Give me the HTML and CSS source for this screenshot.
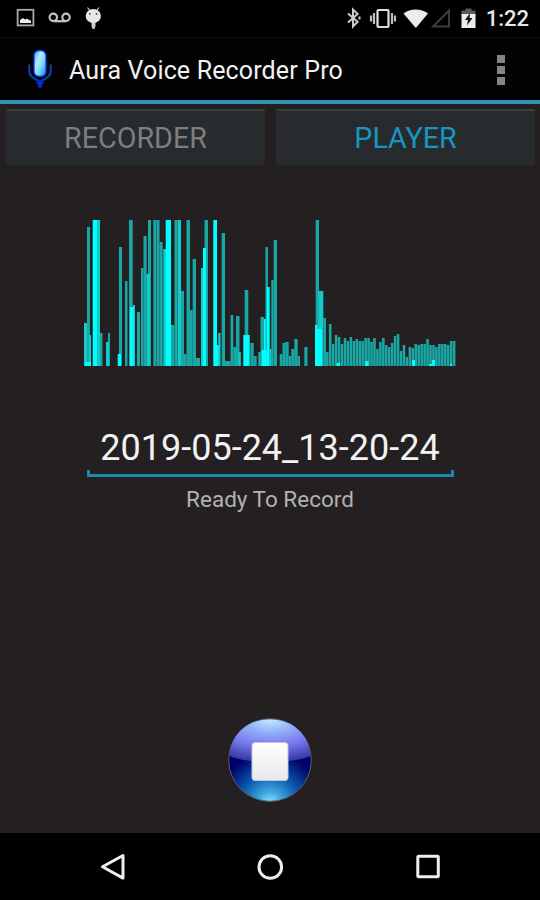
FILE: index.html
```
<!DOCTYPE html>
<html lang="en">

<head>
    <meta charset="UTF-8">
    <meta name="viewport" content="width=device-width, initial-scale=1.0">
    <title>Aura Voice Recorder Pro</title>
    <link rel="stylesheet" href="styles.css">
</head>

<body>
    <div class="status-bar">
        <svg class="status-icons" width="90" height="24" viewBox="0 0 90 24">
            <!-- picture -->
            <rect x="1.6" y="3.8" width="15.8" height="15.6" fill="none" stroke="#aaa" stroke-width="1.8" />
            <path d="M4 17v-3l3-2 2 1.5 2-1 2 1.5 2 .5V17z" fill="#eee" />
            <!-- voicemail -->
            <g fill="none" stroke="#c4c4c4" stroke-width="2.2">
                <circle cx="37.3" cy="11.3" r="3.7" />
                <circle cx="50" cy="11.3" r="3.7" />
                <path d="M37.3 15.2H50" />
            </g>
            <!-- android -->
            <path d="M71.5 1.5l2.3 3M83 1.5l-2.3 3" stroke="#ccc" stroke-width="1.2" />
            <path d="M75.5 15h4v5l-1 3h-2l-1-3z" fill="#ccc" />
            <ellipse cx="77.3" cy="10" rx="7.6" ry="7" fill="#e8e8e8" />
            <circle cx="73.8" cy="7.8" r=".9" fill="#333" />
            <circle cx="80.5" cy="7.8" r=".9" fill="#333" />
        </svg>
        <div class="status-right">
            <svg width="134" height="24" viewBox="0 0 134 24">
                <!-- bluetooth -->
                <path d="M2 7.5l9.6 8.3L7 20.5V3.5l4.6 4.4L2 16.5M13.5 10.500v3" fill="none" stroke="#ccc" stroke-width="2" />
                <!-- vibrate -->
                <rect x="31.5" y="4" width="11" height="17" rx="1" fill="none" stroke="#e0e0e0" stroke-width="2.2" />
                <path d="M28 7v11M46 7v11M25 9.5v6M49 9.5v6" stroke="#bbb" stroke-width="2.2" />
                <!-- wifi -->
                <path d="M57.5 7.5c7-5.300 17.500-5.300 24.500 0L69.800 22z" fill="#ececec" />
                <!-- signal -->
                <path d="M87 20.500h16v-16z" fill="none" stroke="#3d3d3d" stroke-width="2" />
                <!-- battery -->
                <path d="M119.500 2.500h6v2h4v5h-14v-5h4z" fill="#5a5a5a" />
                <path d="M115.500 8h14v14h-14z" fill="#eee" />
                <path d="M124 7l-5 7h3l-1 5.500 5.500-7.500h-3z" fill="#111" />
            </svg>
            <span class="clock">1:22</span>
        </div>
    </div>

    <header class="action-bar">
        <svg class="app-icon" width="26" height="40" viewBox="0 0 26 40">
            <defs>
                <linearGradient id="mic" x1="0" y1="0" x2="1" y2="1">
                    <stop offset="0" stop-color="#3aa5ff" />
                    <stop offset=".35" stop-color="#b5eeff" />
                    <stop offset=".65" stop-color="#6fd2ff" />
                    <stop offset="1" stop-color="#0878f0" />
                </linearGradient>
            </defs>
            <path d="M2.3 15.5v7c0 5 4.5 7.5 10.7 10 6.2-2.5 10.7-5 10.7-10v-7" fill="none" stroke="#0b42ae" stroke-width="2" />
            <path d="M9.5 33h7M13 31v7.5" stroke="#0529d0" stroke-width="4" />
            <rect x="7" y="1.5" width="12" height="26" rx="5" fill="url(#mic)" stroke="#0a35e8" stroke-width="1.3" />
        </svg>
        <h1>Aura Voice Recorder Pro</h1>
        <div class="overflow"><i></i><i></i><i></i></div>
    </header>

    <nav class="tabs">
        <div class="tab">RECORDER</div>
        <div class="tab active">PLAYER</div>
    </nav>

    <main>
        <svg id="wave" width="372" height="146" viewBox="-1 0 372 146"></svg>
        <div class="file-name">2019-05-24_13-20-24</div>
        <div class="message">Ready To Record</div>
        <svg class="stop-button" width="86" height="86" viewBox="0 0 86 86">
            <defs>
                <radialGradient id="ball" cx=".5" cy="1.02" r=".62">
                    <stop offset="0" stop-color="#8ce6ff" />
                    <stop offset=".25" stop-color="#3c9fdd" />
                    <stop offset=".6" stop-color="#0750a8" />
                    <stop offset="1" stop-color="#000066" />
                </radialGradient>
                <radialGradient id="gloss" cx=".5" cy="0" r="1.05">
                    <stop offset="0" stop-color="#c2edff" />
                    <stop offset=".3" stop-color="#92aef8" />
                    <stop offset=".6" stop-color="#7878f0" />
                    <stop offset="1" stop-color="#2c2f98" />
                </radialGradient>
                <linearGradient id="square" x1="0" y1="0" x2="0" y2="1">
                    <stop offset="0" stop-color="#fff" />
                    <stop offset="1" stop-color="#e8e8ec" />
                </linearGradient>
            </defs>
            <circle cx="43" cy="43" r="41.3" fill="url(#ball)" stroke="#55606f" stroke-width="1" />
            <path d="M2.3 39C4 17 21 2.2 43 2.2S82 17 83.7 39c-10 4-25 6-40.7 6S12.3 43 2.3 39z" fill="url(#gloss)" />
            <rect x="25" y="25.5" width="36" height="38" rx="3" fill="url(#square)" stroke="#bfc4df" stroke-width="1" />
        </svg>
    </main>

    <footer class="nav-bar">
        <svg width="30" height="30" viewBox="0 0 30 30">
            <path d="M5.500 14.800L26 3.500v22.600z" />
        </svg>
        <svg width="30" height="30" viewBox="0 0 30 30">
            <circle cx="15.3" cy="15" r="11.3" />
        </svg>
        <svg width="30" height="30" viewBox="0 0 30 30">
            <rect x="4.800" y="4.300" width="20.500" height="20.500" rx="1" />
        </svg>
    </footer>

    <script src="wave.js"></script>
</body>

</html>
```
FILE: styles.css
```
* {
    box-sizing: border-box;
}

body {
    margin: 0;
    height: 900px;
    display: flex;
    flex-direction: column;
    font-family: Roboto, "Liberation Sans", sans-serif;
    background: #242021;
    color: #f2f2f2;
    overflow: hidden;
}

svg {
    display: block;
}

.status-bar {
    height: 37px;
    padding: 0 11px 0 16px;
    display: flex;
    justify-content: space-between;
    align-items: center;
    background: #000;
}

.status-icons {
    margin-top: -2px;
}

.status-right {
    display: flex;
    align-items: center;
    gap: 6px;
}

.status-right svg {
    margin-top: -1px;
}

.clock {
    font-size: 22px;
    line-height: 37px;
    font-weight: 500;
    color: #e8e8e8;
}

.action-bar {
    height: 67px;
    padding: 0 35px 0 27px;
    display: flex;
    align-items: center;
    background: #030303;
    border-top: 1px solid #0c0c0c;
    border-bottom: 4px solid #368fb5;
}

h1 {
    flex: 1;
    margin: 4px 0 0 16px;
    font-size: 25px;
    font-weight: 400;
    line-height: 30px;
    letter-spacing: 0.15px;
}

.overflow {
    display: flex;
    flex-direction: column;
    gap: 3px;
    margin-top: 1px;
}

.overflow i {
    width: 8px;
    height: 8px;
    background: #858585;
}

.tabs {
    display: flex;
    gap: 11px;
    padding: 5px 5px 0 6px;
}

.tab {
    flex: 1;
    height: 56px;
    border-top: 2px solid #3b3e3f;
    border-radius: 2px;
    background: #272b2d;
    color: #7c7e7f;
    font-size: 28.7px;
    line-height: 54px;
    text-align: center;
}

.tab.active {
    color: #1795c3;
}

main {
    flex: 1;
    display: flex;
    flex-direction: column;
    align-items: center;
    padding-top: 55px;
}

.file-name {
    width: 367px;
    height: 50px;
    margin-top: 61px;
    font-size: 36px;
    line-height: 43px;
    text-align: center;
    background:
        linear-gradient(#1b86ae, #1b86ae) left bottom / 3px 7px no-repeat,
        linear-gradient(#1b86ae, #1b86ae) right bottom / 3px 7px no-repeat,
        linear-gradient(#1b86ae, #1b86ae) left bottom / 100% 3px no-repeat;
}

.message {
    margin-top: 8px;
    font-size: 22.5px;
    line-height: 28px;
    color: #b2b1b1;
}

.stop-button {
    margin-top: 204px;
}

.nav-bar {
    height: 67px;
    padding: 0 97px;
    display: flex;
    justify-content: space-between;
    align-items: center;
    background: #000;
}

.nav-bar svg {
    fill: none;
    stroke: #eee;
    stroke-width: 3;
    stroke-linejoin: round;
}

.bar {
    fill: #1ba6a6;
}

.bar-mid {
    fill: #12cccc;
}

.bar-peak {
    fill: #00ffff;
}
```
FILE: wave.js
```
const HEIGHT = 146;

// [left, right, top, shade]
const bars = [
    [-1, 2, 103, 1], [2, 5, 7], [4, 6, 115, 1], [0, 6, 142, 2],
    [7.7, 12.7, 0, 2], [12.7, 15, 0, 1], [15, 17.5, 113],
    [23, 25, 113], [21, 24, 122, 1], [34, 37, 27], [32.7, 36, 134, 2],
    [40, 42.5, 61], [44, 47.7, 0], [48, 50, 85, 1], [45, 48.5, 87, 2],
    [52, 55, 92], [56, 58.5, 48], [58.5, 61.7, 16], [63, 66, 0], [61.5, 65, 54, 1],
    [68.3, 71.2, 0], [71.5, 74.5, 0], [74.5, 77.7, 22],
    [78.3, 81, 29, 1], [80.7, 86, 0, 2], [86, 89.3, 105],
    [89.5, 92.3, 0], [92.5, 96, 0, 1], [96, 99, 71], [99, 101.5, 134],
    [101.5, 105, 0], [105, 107.7, 90], [107.7, 111, 39], [110, 115, 138],
    [116, 119, 48, 1], [119.5, 123, 0], [118, 121, 28, 2],
    [128.3, 132, 0, 2], [131.5, 134, 125, 2], [133.3, 135.5, 113, 1],
    [136.7, 140, 13], [140, 145.5, 141], [145.5, 148.3, 95], [148.3, 151, 127],
    [151, 154.5, 96], [153.5, 155.8, 132, 1], [159.7, 163.3, 70], [158.3, 164.7, 115, 2],
    [165.3, 168.7, 123], [168.7, 171.7, 136], [173.3, 176, 132], [175.5, 179, 97],
    [179, 181, 99, 2], [180.5, 183, 27], [181.7, 184.7, 67, 2], [176.7, 181.7, 130, 2],
    [184.3, 186.7, 129, 1], [186.3, 188.7, 60], [188.7, 192, 20],
    [194.7, 197.5, 134], [197.5, 200.3, 123], [200.3, 203.7, 122], [203.7, 206.3, 136],
    [206.3, 209.3, 129], [209.3, 212.7, 119], [212.7, 215, 136], [219.3, 222.5, 127],
    [230.7, 234, 0], [230, 232.3, 105, 2], [233.5, 238.3, 71, 1], [232, 237, 109, 2],
    [238.3, 241, 98]
];

// steady background noise at the end of the recording
const tail = [132, 104, 124, 115, 117, 124, 118, 121, 117, 121, 119, 121, 121,
    118, 118, 122, 118, 129, 122, 118, 125, 127, 123, 116, 114, 131, 125, 137, 127,
    128, 124, 125, 124, 124, 119, 125, 125, 127, 124, 124, 124, 125, 121, 121];
const step = 2.95;

tail.forEach((top, i) => {
    const x = 241 + i * step;
    bars.push([x, x + step - 0.4, top, 0]);
});

bars.push([251.5, 255, 143, 2], [280, 283.5, 141, 2], [327, 330, 140, 2],
    [347, 350, 140, 2], [344, 347, 144, 2], [365, 367, 144, 2]);

const shades = ['bar', 'bar-mid', 'bar-peak'];
const wave = document.getElementById('wave');

bars.forEach(([left, right, top, shade = 0]) => {
    const rect = document.createElementNS('http://www.w3.org/2000/svg', 'rect');
    rect.setAttribute('class', shades[shade]);
    rect.setAttribute('x', left);
    rect.setAttribute('y', top);
    rect.setAttribute('width', right - left);
    rect.setAttribute('height', HEIGHT - top);
    wave.appendChild(rect);
});
```
